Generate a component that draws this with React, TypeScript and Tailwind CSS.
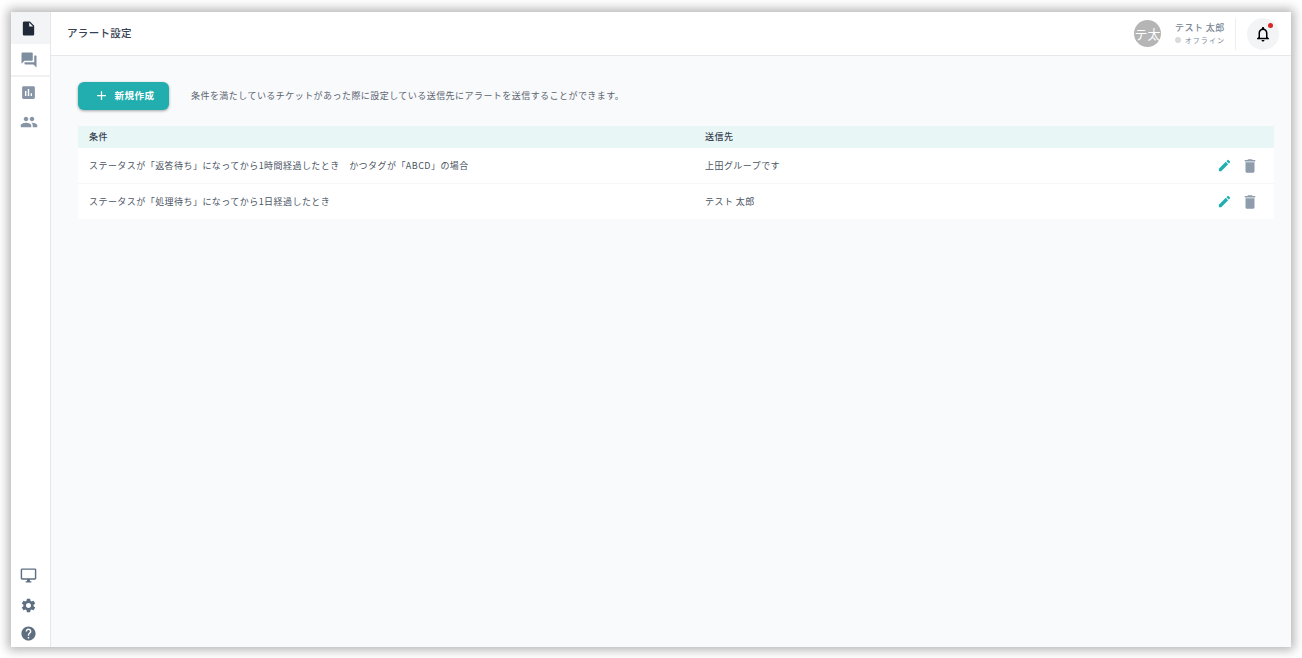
import {
  MdAdd,
  MdAssessment,
  MdDelete,
  MdEdit,
  MdHelp,
  MdInsertDriveFile,
  MdNotificationsNone,
  MdOutlineDesktopWindows,
  MdPeople,
  MdQuestionAnswer,
  MdSettings,
} from 'react-icons/md';

const rows = [
  { condition: 'ステータスが「返答待ち」になってから1時間経過したとき　かつタグが「ABCD」の場合', target: '上田グループです' },
  { condition: 'ステータスが「処理待ち」になってから1日経過したとき', target: 'テスト 太郎' },
];

export default function App() {
  return (
    <div className="h-[658px] w-[1302px] overflow-hidden bg-white pt-3 pr-[11px] pb-[11px] pl-[11px] font-['Noto_Sans_CJK_JP','Noto_Sans',sans-serif] text-[9px] tracking-[0.05em] text-[#4b5563]">
      <div className="flex h-full w-full bg-[#f9fafc] shadow-[0_0_10px_3px_rgba(0,0,0,0.3)]">
        <aside className="flex w-10 shrink-0 flex-col border-r border-[#e5e7eb] bg-white">
          <div className="flex h-8 items-center justify-center bg-[#f3f4f6] pr-1 text-[#1f2937]">
            <MdInsertDriveFile size={17} />
          </div>
          <div className="flex h-[33px] items-center justify-center border-b-2 border-[#f0f1f3] pr-1 text-[#7f8da0]">
            <MdQuestionAnswer size={18} />
          </div>
          <div className="flex h-[31px] items-center justify-center pr-1 text-[#8795a6]">
            <MdAssessment size={17} />
          </div>
          <div className="flex h-[28px] items-center justify-center pr-1 text-[#8795a6]">
            <MdPeople size={18} />
          </div>
          <div className="mt-auto flex h-[29px] items-center justify-center pr-1 text-[#5f6f82]">
            <MdOutlineDesktopWindows size={17} />
          </div>
          <div className="flex h-[30px] items-center justify-center pr-1 text-[#5f6f82]">
            <MdSettings size={17} />
          </div>
          <div className="flex h-[27px] items-center justify-center pr-1 text-[#5f6f82]">
            <MdHelp size={17} />
          </div>
        </aside>

        <main className="flex min-w-0 flex-1 flex-col">
          <header className="flex h-11 items-center justify-between border-b border-[#e5e7eb] bg-white pr-3 pl-4">
            <h1 className="pb-0.5 text-[10.5px] font-medium tracking-[0.03em] text-[#374151]">アラート設定</h1>
            <div className="flex items-center">
              <div className="flex h-[27px] w-[27px] items-center justify-center rounded-full bg-[#b5b5b5] text-[13px] tracking-normal whitespace-nowrap text-white">
                テ太
              </div>
              <div className="ml-[14px] w-[50px] whitespace-nowrap">
                <div className="text-[9px] leading-[13px] font-medium text-[#7b8794]">テスト 太郎</div>
                <div className="flex items-center gap-1 text-[7px] leading-[12px] tracking-[0.15em] text-[#7b8794]">
                  <span className="h-[6px] w-[6px] rounded-full bg-[#d8dadd]" />
                  オフライン
                </div>
              </div>
              <div className="mr-[11px] ml-[10px] h-8 w-px bg-[#eceef0]" />
              <div className="relative flex h-8 w-8 items-center justify-center rounded-full bg-[#f3f4f6] text-black">
                <MdNotificationsNone size={18} />
                <span className="absolute top-[5px] right-[6px] h-[5px] w-[5px] rounded-full bg-[#dc2626]" />
              </div>
            </div>
          </header>

          <div className="flex flex-col pt-[26px] pr-[17px] pl-[27px]">
            <div className="flex items-center">
              <button className="flex h-[28px] w-[91px] items-center justify-center gap-[6px] rounded-md bg-[#22aeae] pb-px pl-px text-[9.5px] font-bold text-white shadow-[0_1px_3px_rgba(0,0,0,0.35)]">
                <MdAdd size={15} />
                新規作成
              </button>
              <p className="ml-[22px] text-[#5b6470]">
                条件を満たしているチケットがあった際に設定している送信先にアラートを送信することができます。
              </p>
            </div>

            <div className="mt-[16px] flex h-[22px] items-center bg-[#e8f6f5] pl-[11px] font-medium text-[#374151]">
              <span className="w-[616px]">条件</span>
              <span>送信先</span>
            </div>
            {rows.map((row) => (
              <div key={row.target} className="flex h-9 items-center border-b border-[#f6f7f9] bg-white pl-[11px] text-[#4b5563] last:h-[35px] last:border-b-0">
                <span className="w-[616px] truncate">{row.condition}</span>
                <span>{row.target}</span>
                <div className="mr-[15px] ml-auto flex items-center gap-[9px]">
                  <MdEdit size={15} className="text-[#22aeae]" />
                  <MdDelete size={18} className="text-[#8f9cac]" />
                </div>
              </div>
            ))}
          </div>
        </main>
      </div>
    </div>
  );
}
